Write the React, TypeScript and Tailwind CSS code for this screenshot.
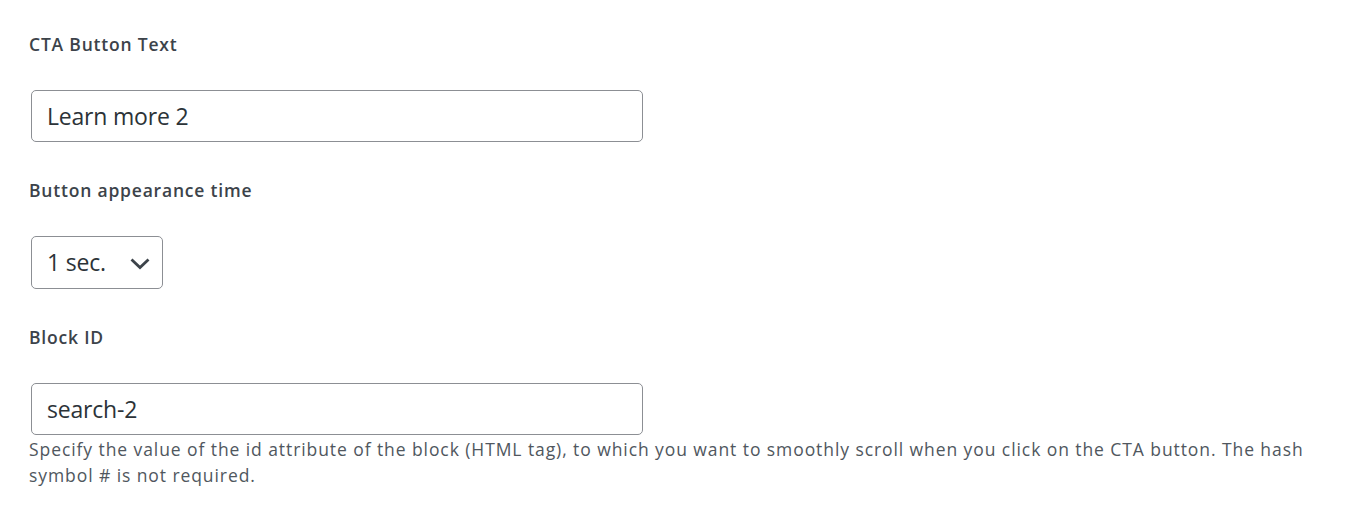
import React from "react";

const font = { fontFamily: '"Open Sans", "Noto Sans", sans-serif' };

function Label({ children }: { children: React.ReactNode }) {
  return (
    <div className="text-[17.5px] leading-[26px] font-semibold tracking-[0.8px] text-[#3c434a]">{children}</div>
  );
}

export default function App() {
  return (
    <div className="w-[1358px] h-[521px] bg-white pl-[29px] pt-[31px]" style={font}>
      <Label>CTA Button Text</Label>
      <div className="mt-[33px] ml-[2px] w-[612px] h-[52px] rounded-[5px] border border-[#8c8f94] flex items-center pl-[15px] pt-[1px] text-[23px] tracking-[-0.2px] text-[#2c3338]">
        Learn more 2
      </div>

      <div className="mt-[35px]">
        <Label>Button appearance time</Label>
      </div>
      <div className="mt-[33px] ml-[2px] w-[132px] h-[53px] rounded-[5px] border border-[#8c8f94] flex items-center justify-between pl-[15px] pr-[12px] text-[23px] tracking-[-0.2px] text-[#2c3338]">
        <span>1 sec.</span>
        <svg width="20" height="12" viewBox="0 0 20 12" className="block mt-[2px]">
          <polyline points="1.5,1.5 10,9.5 18.5,1.5" fill="none" stroke="#3c434a" strokeWidth="2.8" />
        </svg>
      </div>

      <div className="mt-[35px]">
        <Label>Block ID</Label>
      </div>
      <div className="mt-[33px] ml-[2px] w-[612px] h-[52px] rounded-[5px] border border-[#8c8f94] flex items-center pl-[15px] pt-[1px] text-[23px] tracking-[-0.2px] text-[#2c3338]">
        search-2
      </div>
      <p className="mt-[1px] w-[1320px] text-[17.5px] leading-[26px] tracking-[0.92px] text-[#50575e]">
        Specify the value of the id attribute of the block (HTML tag), to which you want to smoothly scroll when you click on the CTA button. The hash
        <br />
        symbol # is not required.
      </p>
    </div>
  );
}
